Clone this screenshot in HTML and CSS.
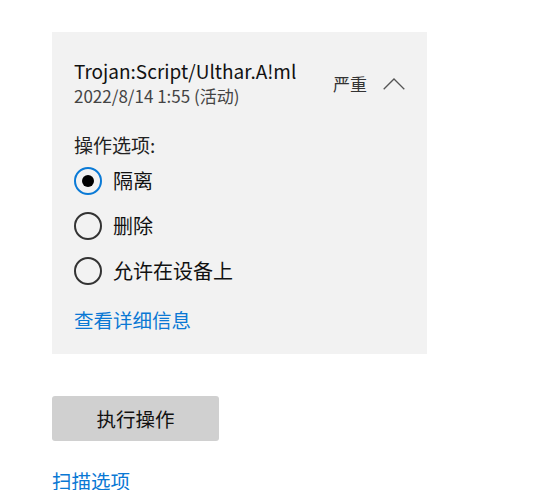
FILE: index.html
```html
<!DOCTYPE html>
<html lang="zh-CN">
<head>
<meta charset="utf-8">
<title>威胁详情</title>
<link rel="stylesheet" href="styles.css">
</head>
<body>
<main class="page">
  <section class="threat">
    <header class="threat-head">
      <div class="threat-info">
        <div class="threat-name">Trojan:Script/Ulthar.A!ml</div>
        <div class="threat-date">2022/8/14 1:55 (活动)</div>
      </div>
      <div class="threat-level">严重</div>
      <svg class="chevron" width="22" height="12" viewBox="0 0 22 12" aria-hidden="true">
        <path d="M0.7 11.3 L11 1 L21.3 11.3" fill="none" stroke="#555" stroke-width="1.3"/>
      </svg>
    </header>
    <div class="options-label">操作选项:</div>
    <div class="options">
      <label class="option">
        <span class="radio radio-checked"></span>
        <span class="option-text">隔离</span>
      </label>
      <label class="option">
        <span class="radio"></span>
        <span class="option-text">删除</span>
      </label>
      <label class="option">
        <span class="radio"></span>
        <span class="option-text">允许在设备上</span>
      </label>
    </div>
    <a class="link details-link" href="#">查看详细信息</a>
  </section>
  <button class="action-btn" type="button">执行操作</button>
  <a class="link scan-link" href="#">扫描选项</a>
</main>
</body>
</html>
```
FILE: styles.css
```css
html, body {
  margin: 0;
  padding: 0;
  background: #ffffff;
}
body {
  font-family: "Noto Sans CJK SC", sans-serif;
  color: #1a1a1a;
}
.page {
  display: flex;
  flex-direction: column;
  align-items: flex-start;
  padding: 32px 0 0 52px;
}
.threat {
  box-sizing: border-box;
  width: 375px;
  background: #f2f2f2;
  padding: 26px 22px 21px 22px;
  display: flex;
  flex-direction: column;
  align-items: flex-start;
}
.threat-head {
  display: flex;
  align-items: center;
  width: 100%;
}
.threat-info {
  flex: 1;
}
.threat-name {
  font-size: 19px;
  line-height: 26px;
  color: #111;
}
.threat-date {
  font-size: 17px;
  line-height: 24px;
  color: #444;
}
.threat-level {
  font-size: 17px;
  line-height: 24px;
  color: #333;
  margin-right: 16px;
  margin-top: 2px;
}
.chevron {
  display: block;
  margin-top: 2px;
}
.options-label {
  margin-top: 24px;
  font-size: 19px;
  line-height: 26px;
  color: #222;
}
.options {
  display: flex;
  flex-direction: column;
}
.option {
  display: flex;
  align-items: center;
  height: 45px;
  gap: 11px;
}
.radio {
  box-sizing: border-box;
  width: 28px;
  height: 28px;
  border-radius: 50%;
  border: 2px solid #333;
  display: flex;
  align-items: center;
  justify-content: center;
}
.radio-checked {
  border-color: #0a7ad6;
}
.radio-checked::after {
  content: "";
  width: 12px;
  height: 12px;
  border-radius: 50%;
  background: #000;
}
.option-text {
  font-size: 20px;
  line-height: 26px;
  color: #111;
}
.link {
  color: #0a78d4;
  text-decoration: none;
  font-size: 19.5px;
  line-height: 26px;
}
.details-link {
  margin-top: 14px;
}
.action-btn {
  margin-top: 42px;
  width: 167px;
  height: 45px;
  border: none;
  border-radius: 3px;
  background: #d0d0d0;
  font-family: "Noto Sans CJK SC", sans-serif;
  font-size: 19.5px;
  color: #111;
  padding: 0;
}
.scan-link {
  margin-top: 27px;
}
```
